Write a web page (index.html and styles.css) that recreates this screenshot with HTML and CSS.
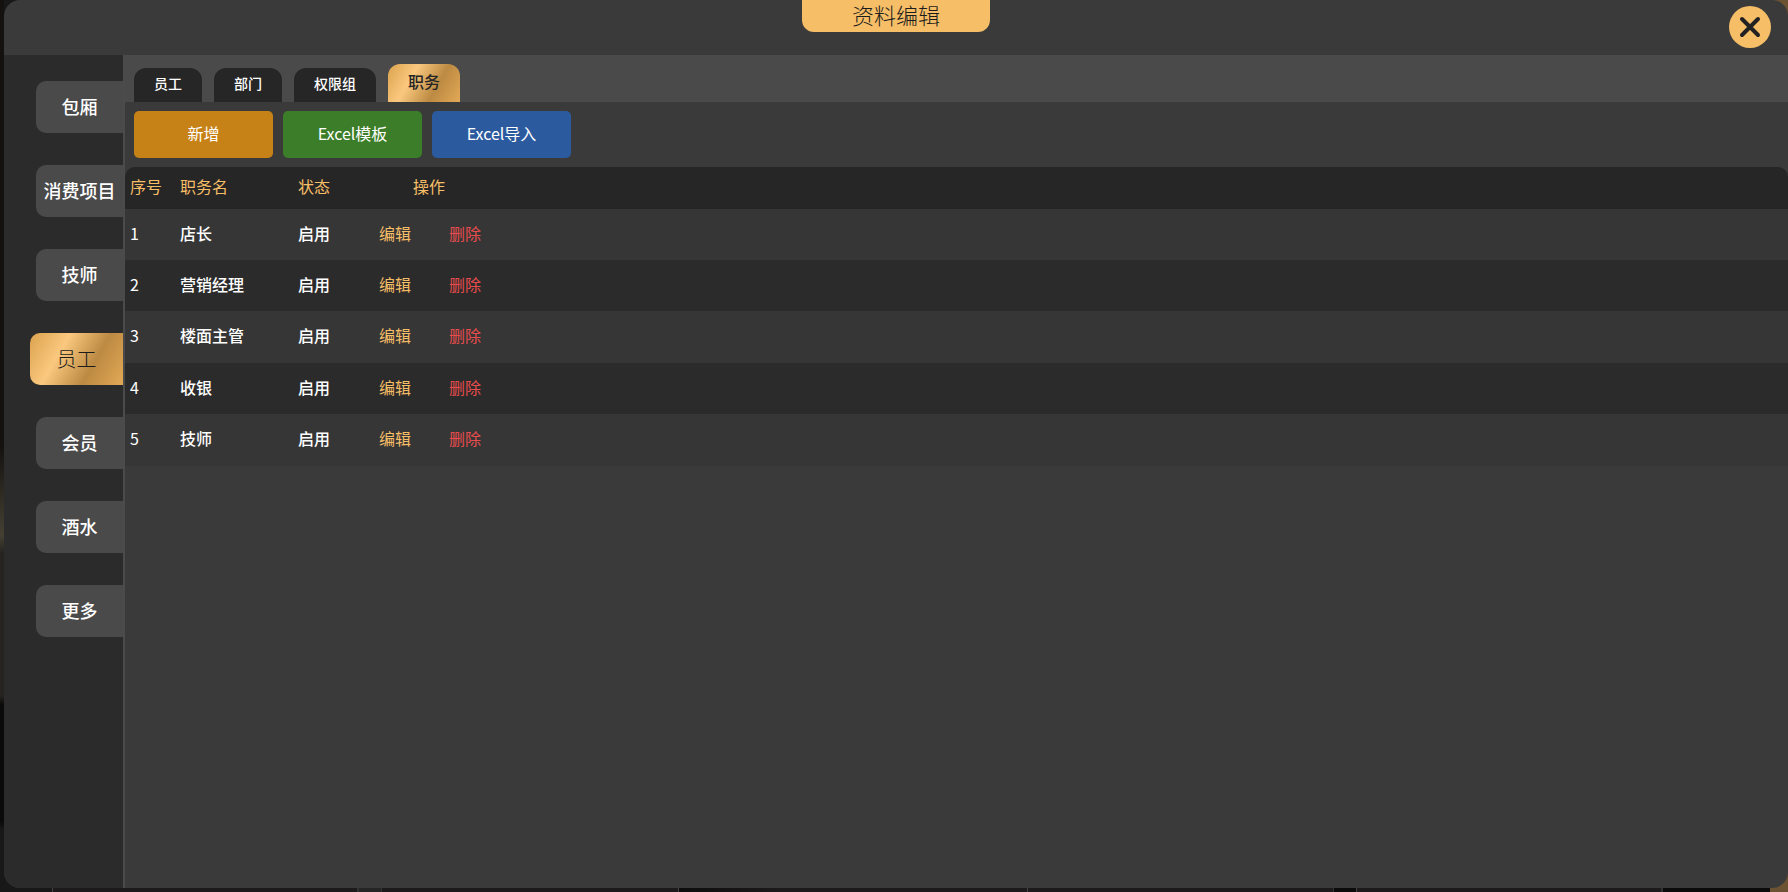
FILE: index.html
```
<!DOCTYPE html>
<html lang="zh-CN">
<head>
<meta charset="utf-8">
<title>资料编辑</title>
<link rel="stylesheet" href="styles.css">
</head>
<body>
<div class="dialog">
  <header class="header">
    <h1 class="title">资料编辑</h1>
    <button class="close" type="button" aria-label="关闭">
      <svg viewBox="0 0 42 42"><path d="M13 13 29 29M29 13 13 29"/></svg>
    </button>
  </header>
  <div class="body">
    <nav class="sidebar">
      <button type="button" class="side-item">包厢</button>
      <button type="button" class="side-item">消费项目</button>
      <button type="button" class="side-item">技师</button>
      <button type="button" class="side-item active">员工</button>
      <button type="button" class="side-item">会员</button>
      <button type="button" class="side-item">酒水</button>
      <button type="button" class="side-item">更多</button>
    </nav>
    <main class="content">
      <div class="tabs">
        <button type="button" class="tab">员工</button>
        <button type="button" class="tab">部门</button>
        <button type="button" class="tab">权限组</button>
        <button type="button" class="tab active">职务</button>
      </div>
      <div class="toolbar">
        <button type="button" class="action add">新增</button>
        <button type="button" class="action template">Excel模板</button>
        <button type="button" class="action import">Excel导入</button>
      </div>
      <table class="table">
        <colgroup><col class="c-no"><col class="c-name"><col class="c-state"><col class="c-edit"><col class="c-del"><col></colgroup>
        <thead>
          <tr><th>序号</th><th>职务名</th><th>状态</th><th colspan="2" class="ops">操作</th><td></td></tr>
        </thead>
        <tbody>
          <tr><td>1</td><td>店长</td><td>启用</td><td><button type="button" class="edit">编辑</button></td><td><button type="button" class="del">删除</button></td><td></td></tr>
          <tr><td>2</td><td>营销经理</td><td>启用</td><td><button type="button" class="edit">编辑</button></td><td><button type="button" class="del">删除</button></td><td></td></tr>
          <tr><td>3</td><td>楼面主管</td><td>启用</td><td><button type="button" class="edit">编辑</button></td><td><button type="button" class="del">删除</button></td><td></td></tr>
          <tr><td>4</td><td>收银</td><td>启用</td><td><button type="button" class="edit">编辑</button></td><td><button type="button" class="del">删除</button></td><td></td></tr>
          <tr><td>5</td><td>技师</td><td>启用</td><td><button type="button" class="edit">编辑</button></td><td><button type="button" class="del">删除</button></td><td></td></tr>
        </tbody>
      </table>
    </main>
  </div>
</div>
</body>
</html>
```
FILE: styles.css
```
* { box-sizing: border-box; }

body {
  margin: 0;
  min-height: 100vh;
  padding: 0 0 4px 4px;
  display: flex;
  background:
    linear-gradient(#141210 50%, #454033 60%, #262420 62%, #262420 78%, #0a0a0a 79%, #0a0a0a 92%, #181818 93%) left top / 4px 100% no-repeat,
    linear-gradient(to right,
      #181818 52px, #444 52px, #444 53px, #1c1a1a 53px,
      #1c1a1a 357px, #333 357px, #333 359px, #252525 359px,
      #252525 381px, #333 381px, #333 382px, #1c1a1a 382px,
      #1c1a1a 678px, #444 678px, #444 679px, #0e0d0d 679px,
      #1c1a1a 780px, #1c1a1a 1027px, #444 1027px, #444 1028px, #1c1a1a 1028px,
      #1c1a1a 1333px, #333 1333px, #333 1334px, #0b0b0b 1334px,
      #0b0b0b 1356px, #444 1356px, #444 1357px, #1c1a1a 1357px,
      #1c1a1a 1661px, #333 1661px, #333 1663px, #0b0b0b 1663px,
      #0b0b0b calc(100% - 18px), #6b5233 calc(100% - 18px));
  color: #fff;
  font-family: "Noto Sans CJK SC", sans-serif;
  font-size: 16px;
  line-height: 24px;
}

button {
  margin: 0;
  padding: 0 0 3px;
  border: 0;
  background: none;
  color: inherit;
  font: inherit;
  font-weight: 500;
  cursor: pointer;
}

.dialog {
  flex: 1;
  display: flex;
  flex-direction: column;
  overflow: hidden;
  border-radius: 16px;
  background: #3a3a3a;
}

.header {
  height: 55px;
  display: grid;
  grid-template-columns: 1fr auto 1fr;
  align-items: start;
}

.title {
  grid-column: 2;
  width: 188px;
  height: 32px;
  margin: 0;
  border-radius: 0 0 12px 12px;
  background: #f6be67;
  color: #1c1c1c;
  font-size: 22px;
  font-weight: 300;
  line-height: 28px;
  text-align: center;
}

.close {
  justify-self: end;
  width: 42px;
  height: 42px;
  margin: 6px 17px 0 0;
  padding: 0;
  border-radius: 50%;
  background: #f6be67;
}

.close svg {
  display: block;
  fill: none;
  stroke: #222;
  stroke-width: 4;
  stroke-linecap: round;
}

.body {
  flex: 1;
  display: flex;
}

.sidebar {
  width: 121px;
  padding-top: 26px;
  display: flex;
  flex-direction: column;
  align-items: flex-end;
  gap: 32px;
  border-right: 2px solid #4b4b4b;
  background: #2b2b2b;
}

.side-item {
  width: 87px;
  height: 52px;
  padding: 0 0 2px;
  border-radius: 10px 0 0 10px;
  background: #4a4a4a;
  font-size: 18px;
}

.side-item.active {
  width: 93px;
  padding: 0;
  color: #1c1c1c;
  font-size: 20px;
  font-weight: 300;
}

.side-item.active,
.tab.active {
  background: linear-gradient(120deg, #dba24e, #fac87e 33%, #bd8a43 66%, #e2a956);
}

.content {
  flex: 1;
  min-width: 0;
}

.tabs {
  height: 47px;
  padding-left: 9px;
  display: flex;
  align-items: flex-end;
  gap: 12px;
  background: #4a4a4a;
}

.tab {
  height: 34px;
  padding: 0 20px 4px;
  border-radius: 12px 12px 0 0;
  background: #262626;
  font-size: 14px;
}

.tab.active {
  height: 38px;
  color: #252525;
  font-size: 16px;
}

.toolbar {
  padding: 9px;
  display: flex;
  gap: 10px;
}

.action {
  width: 139px;
  height: 47px;
  border-radius: 5px;
  font-weight: 400;
}

.add { background: #c68217; }
.template { background: #3b7d28; }
.import { background: #2c5a9e; }

.table {
  width: 100%;
  table-layout: fixed;
  border-collapse: collapse;
}

.c-no { width: 50px; }
.c-name { width: 118px; }
.c-state { width: 81px; }
.c-edit, .c-del { width: 70px; }

th, td {
  padding: 0 0 4px 5px;
  text-align: left;
  font-weight: 500;
}

td:first-child { font-weight: 400; }
td button { padding: 0; font-weight: 400; }

thead tr {
  height: 42px;
}

thead th,
thead td { background: #262626; }

th {
  color: #f6be67;
  font-weight: 400;
}

.ops { padding: 0 30px 4px 0; text-align: center; }
thead th:first-child { border-radius: 10px 0 0 0; }
thead td:last-child { border-radius: 0 10px 0 0; }

tbody tr { height: 52px; background: #363636; }
tbody tr:nth-child(even) { height: 51px; background: #2b2b2b; }
tbody tr:first-child { height: 51px; }

.edit { color: #f6be67; }
.del { color: #e84d4d; }
```
